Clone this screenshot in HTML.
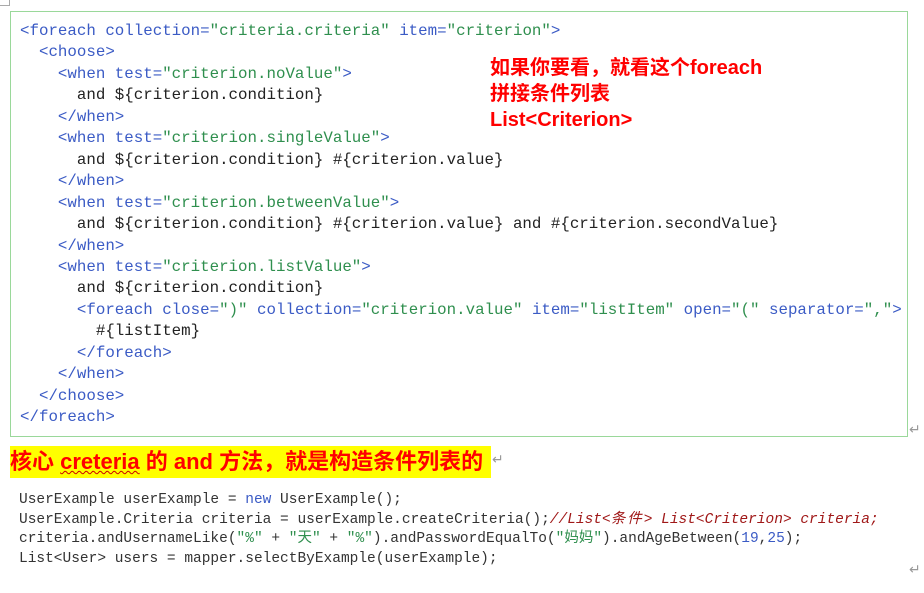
<!DOCTYPE html>
<html><head><meta charset="utf-8"><style>
body{margin:0;width:924px;height:593px;background:#fff;position:relative;overflow:hidden;font-family:"Liberation Mono","Noto Sans CJK SC",monospace}
.box{position:absolute;left:10px;top:11px;width:898px;height:426px;border:1px solid #9ad89a;box-sizing:border-box}
.code{position:absolute;left:20px;top:21px;font-size:15.8px;line-height:21.45px;white-space:pre;color:#222}
.t{color:#3b5bc5}.s{color:#2f8f4e}
.note{position:absolute;left:490px;top:55px;color:#f00;font:bold 20px/26px "Liberation Sans","Noto Sans CJK SC",sans-serif}
.hd{position:absolute;left:10px;top:446px;height:32px;width:481px;background:#ff0;color:#f00;font:bold 22px/32px "Liberation Sans","Noto Sans CJK SC",sans-serif;white-space:nowrap;overflow:hidden}
.hd u{text-decoration:underline wavy #c00;text-decoration-thickness:1px}
.jc{position:absolute;left:19px;top:491px;font-size:14.5px;line-height:19.7px;white-space:pre;color:#333}
.c{color:#a01818;font-style:italic}
.cj{letter-spacing:2px}
.r{position:absolute;color:#999;font:14px "DejaVu Sans",sans-serif}
.corner{position:absolute;left:0;top:0;width:9px;height:5px;border-right:1px solid #aaa;border-bottom:1px solid #aaa}
</style></head><body>
<div class="corner"></div>
<div class="box"></div>
<div class="code"><span class="t">&lt;foreach collection=</span><span class="s">"criteria.criteria"</span> <span class="t">item=</span><span class="s">"criterion"</span><span class="t">&gt;</span>
  <span class="t">&lt;choose&gt;</span>
    <span class="t">&lt;when test=</span><span class="s">"criterion.noValue"</span><span class="t">&gt;</span>
      and ${criterion.condition}
    <span class="t">&lt;/when&gt;</span>
    <span class="t">&lt;when test=</span><span class="s">"criterion.singleValue"</span><span class="t">&gt;</span>
      and ${criterion.condition} #{criterion.value}
    <span class="t">&lt;/when&gt;</span>
    <span class="t">&lt;when test=</span><span class="s">"criterion.betweenValue"</span><span class="t">&gt;</span>
      and ${criterion.condition} #{criterion.value} and #{criterion.secondValue}
    <span class="t">&lt;/when&gt;</span>
    <span class="t">&lt;when test=</span><span class="s">"criterion.listValue"</span><span class="t">&gt;</span>
      and ${criterion.condition}
      <span class="t">&lt;foreach close=</span><span class="s">")"</span> <span class="t">collection=</span><span class="s">"criterion.value"</span> <span class="t">item=</span><span class="s">"listItem"</span> <span class="t">open=</span><span class="s">"("</span> <span class="t">separator=</span><span class="s">","</span><span class="t">&gt;</span>
        #{listItem}
      <span class="t">&lt;/foreach&gt;</span>
    <span class="t">&lt;/when&gt;</span>
  <span class="t">&lt;/choose&gt;</span>
<span class="t">&lt;/foreach&gt;</span></div>
<div class="note">如果你要看，就看这个foreach<br>拼接条件列表<br>List&lt;Criterion&gt;</div>
<div class="r" style="left:909px;top:422px">↵</div>
<div class="hd">核心 <u>creteria</u> 的 and 方法，就是构造条件列表的</div>
<div class="r" style="left:492px;top:452px">↵</div>
<div class="jc">UserExample userExample = <span class="t">new</span> UserExample();
UserExample.Criteria criteria = userExample.createCriteria();<span class="c">//List&lt;<span class="cj">条件</span>&gt; List&lt;Criterion&gt; criteria;</span>
criteria.andUsernameLike(<span class="s">"%"</span> + <span class="s">"天"</span> + <span class="s">"%"</span>).andPasswordEqualTo(<span class="s">"妈妈"</span>).andAgeBetween(<span class="t">19</span>,<span class="t">25</span>);
List&lt;User&gt; users = mapper.selectByExample(userExample);</div>
<div class="r" style="left:909px;top:562px">↵</div>
</body></html>
